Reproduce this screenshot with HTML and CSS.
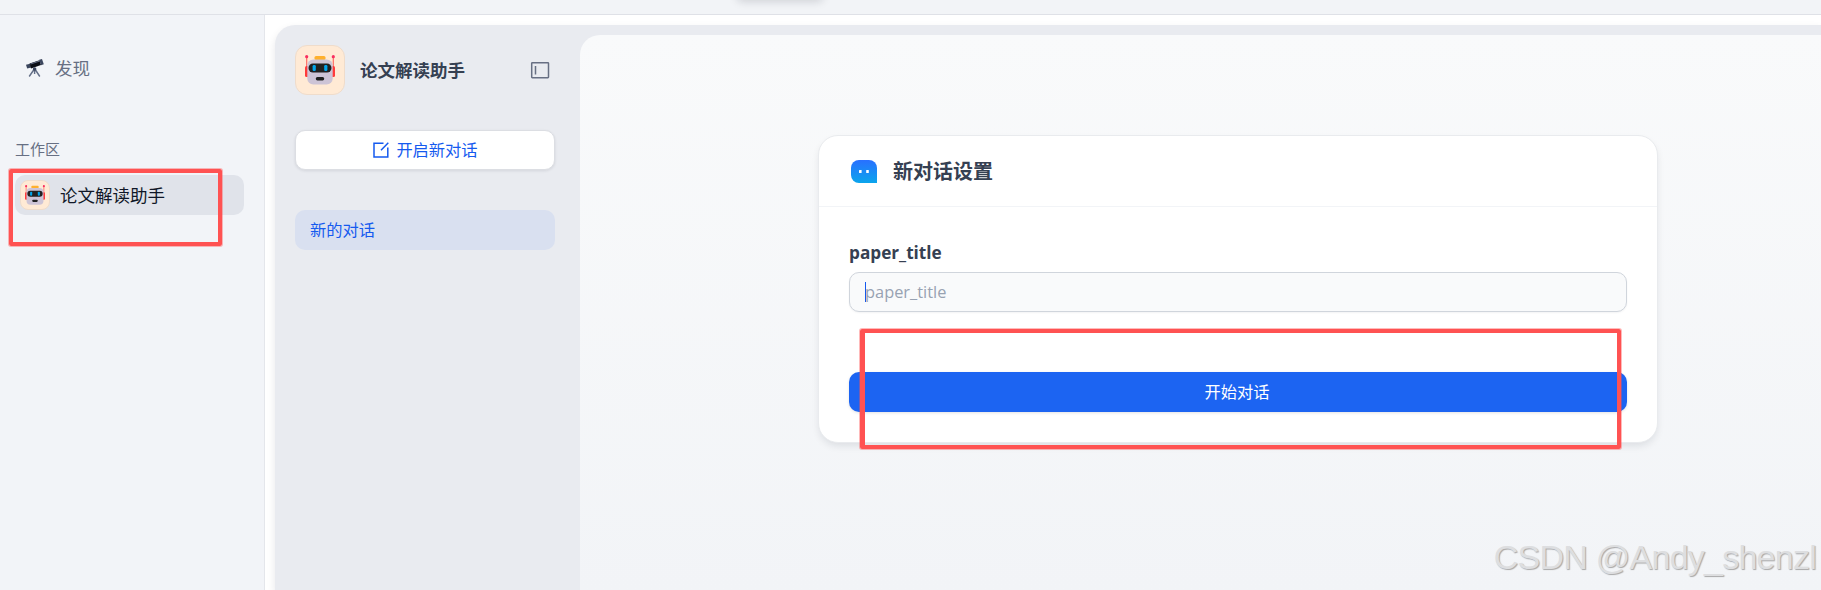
FILE: index.html
```html
<!DOCTYPE html>
<html lang="zh-CN">
<head>
  <meta charset="UTF-8">
  <meta name="viewport" content="width=device-width, initial-scale=1.0">
  <title>论文解读助手</title>
  <link rel="stylesheet" href="styles.css">
</head>
<body>
  <!-- Robot avatar, shared by both sidebars -->
  <svg class="defs" width="0" height="0">
    <symbol id="robot" viewBox="0 0 30 30">
      <path d="M1.7 2v12M28.3 2v12" stroke="#ff6b63" stroke-width="1.2"/>
      <circle cx="1.7" cy="1.7" r="1.6" fill="#f92f60"/>
      <circle cx="28.3" cy="1.7" r="1.6" fill="#f92f60"/>
      <rect x="0" y="11" width="4" height="11" rx="1.5" fill="#ff3b3b"/>
      <rect x="26" y="11" width="4" height="11" rx="1.5" fill="#ff3b3b"/>
      <rect x="9.5" y="1" width="11" height="4" rx="1.5" fill="#ffb02e"/>
      <rect x="2.3" y="4.5" width="25.4" height="25" rx="6" fill="#cdc4d6"/>
      <rect x="3.5" y="8.5" width="23" height="9" rx="4.5" fill="#212121"/>
      <rect x="7.6" y="10" width="3.2" height="6" rx="1.3" fill="#00a6ed"/>
      <rect x="19.2" y="10" width="3.2" height="6" rx="1.3" fill="#00a6ed"/>
      <rect x="10.8" y="22" width="8.4" height="3.4" rx="1.6" fill="#212121"/>
    </symbol>
  </svg>

  <!-- Top Bar -->
  <div class="topbar">
    <div class="nav-pill"></div>
  </div>

  <div class="layout">
    <!-- Workspace Sidebar -->
    <div class="sidebar">
      <div class="discover">
        <svg class="telescope" viewBox="0 0 20 20">
          <path d="M9 11.5L4.2 18.5M10.2 11.5L14.8 18.5M9.6 11v5" stroke="#636e87" stroke-width="1.4" fill="none"/>
          <path d="M1 6.8L5 5.8L6.2 9.6L2.2 10.6Z" fill="#3c465e"/>
          <path d="M4.6 5.5L14.5 2.3L16 7L6 10.4Z" fill="#0b0d14"/>
          <path d="M5.5 6L14.8 3" stroke="#636e87" stroke-width="1"/>
          <path d="M14.2 1.8L17 1L18.8 6.2L16 7.2Z" fill="#3c465e"/>
          <circle cx="9.6" cy="11" r="1.8" fill="#3c465e"/>
        </svg>
        <span>发现</span>
      </div>
      <div class="section-title">工作区</div>
      <div class="app-item">
        <div class="avatar small"><svg><use href="#robot"/></svg></div>
        <span>论文解读助手</span>
      </div>
      <div class="mark mark-app"></div>
    </div>

    <!-- Main Section -->
    <div class="main">
      <div class="panel">
        <!-- Conversation List -->
        <div class="chat-list">
          <div class="chat-header">
            <div class="avatar"><svg><use href="#robot"/></svg></div>
            <h2>论文解读助手</h2>
            <svg class="toggle" viewBox="0 0 20 18" fill="none" stroke="#676f83">
              <rect x="1.7" y="1.7" width="16.8" height="15" rx=".6" stroke-width="1.5"/>
              <path d="M5.5 5v8.5" stroke-width="1.5"/>
            </svg>
          </div>
          <button class="new-chat">
            <svg viewBox="0 0 16 16" fill="none" stroke="#155aef" stroke-width="1.5">
              <path d="M10.5 1.3H1V15h13.8V5.5M8 8.2L15.3.8"/>
            </svg>
            <span>开启新对话</span>
          </button>
          <div class="chat-item">新的对话</div>
        </div>

        <!-- Chat Area -->
        <div class="chat">
          <div class="card">
            <div class="card-header">
              <svg class="bubble" viewBox="0 0 26 23">
                <defs>
                  <linearGradient id="bubbleFill" x1="0" y1="0" x2="0" y2="1">
                    <stop offset="0" stop-color="#2970ff"/>
                    <stop offset="1" stop-color="#0ba5ec"/>
                  </linearGradient>
                </defs>
                <path d="M8 0h10a8 8 0 0 1 8 8v15H8a8 8 0 0 1-8-8V8a8 8 0 0 1 8-8z" fill="url(#bubbleFill)"/>
                <rect x="8" y="10" width="2.6" height="3" rx=".5" fill="#fff"/>
                <rect x="15.2" y="10" width="2.6" height="3" rx=".5" fill="#fff"/>
              </svg>
              <h3>新对话设置</h3>
            </div>
            <div class="card-body">
              <label class="field-label" for="paper">paper_title</label>
              <div class="field">
                <div class="caret"></div>
                <input id="paper" type="text" placeholder="paper_title">
              </div>
              <button class="start">开始对话</button>
            </div>
            <div class="mark mark-start"></div>
          </div>
        </div>
      </div>
    </div>
  </div>

  <div class="watermark">CSDN @Andy_shenzl</div>
</body>
</html>
```
FILE: styles.css
```css
/* Global Styles */
* {
  margin: 0;
  padding: 0;
  box-sizing: border-box;
}

body {
  font-family: "Open Sans", "Noto Sans CJK SC", sans-serif;
  height: 100vh;
  display: flex;
  flex-direction: column;
  overflow: hidden;
  background: #fff;
  color: #354052;
}

button,
input {
  font-family: inherit;
  font-size: 16.25px;
}

svg {
  display: block;
  flex-shrink: 0;
}

.defs {
  position: absolute;
}

/* Top Bar */
.topbar {
  height: 15px;
  flex-shrink: 0;
  background: #f2f4f7;
  border-bottom: 1px solid #dfe1e7;
  overflow: hidden;
}

.nav-pill {
  width: 86px;
  height: 10px;
  margin: -11px 0 0 737px;
  border-radius: 10px;
  background: #fff;
  box-shadow: 0 2px 10px rgba(16, 24, 40, 0.18);
}

.layout {
  flex: 1;
  display: flex;
  min-height: 0;
}

/* Workspace Sidebar */
.sidebar {
  position: relative;
  width: 265px;
  flex-shrink: 0;
  padding: 33px 20px 0 15px;
  background: #f2f4f8;
  border-right: 1px solid #e4e6eb;
}

.discover {
  display: flex;
  align-items: center;
  gap: 10px;
  height: 40px;
  padding-left: 10px;
  font-size: 17.5px;
  color: #676f83;
}

.discover span,
.app-item span,
.new-chat span {
  padding-bottom: 2px;
}

.telescope {
  width: 20px;
  height: 20px;
}

.section-title {
  margin-top: 50px;
  line-height: 22px;
  font-size: 15px;
  color: #676f83;
}

.app-item {
  display: flex;
  align-items: center;
  gap: 10px;
  height: 40px;
  margin-top: 15px;
  padding-left: 5px;
  border-radius: 10px;
  background: #e0e3ea;
  font-size: 17.5px;
  color: #101828;
}

.avatar {
  display: flex;
  align-items: center;
  justify-content: center;
  width: 50px;
  height: 50px;
  flex-shrink: 0;
  border: 1px solid #efdccb;
  border-radius: 12px;
  background: #ffead5;
}

.avatar svg {
  width: 30px;
  height: 30px;
}

.avatar.small {
  width: 30px;
  height: 30px;
  border-radius: 8px;
}

.avatar.small svg {
  width: 20px;
  height: 20px;
}

/* Main Section */
.main {
  flex: 1;
  display: flex;
  min-width: 0;
  padding: 10px 0 0 10px;
}

.panel {
  flex: 1;
  display: flex;
  padding-top: 10px;
  border-radius: 20px 0 0 0;
  background: #e9ebf0;
  box-shadow: 0 4px 8px rgba(16, 24, 40, 0.1);
}

/* Conversation List */
.chat-list {
  width: 305px;
  flex-shrink: 0;
  padding: 10px 25px 0 20px;
}

.chat-header {
  display: flex;
  align-items: center;
  height: 50px;
}

.chat-header h2 {
  flex: 1;
  margin-left: 15px;
  padding-bottom: 1px;
  font-size: 17.5px;
  font-weight: 700;
}

.toggle {
  width: 20px;
  height: 18px;
  margin-right: 5px;
}

.new-chat {
  display: flex;
  align-items: center;
  justify-content: center;
  gap: 7px;
  width: 100%;
  height: 40px;
  margin-top: 35px;
  padding-left: 1px;
  border: 1px solid #dcdee3;
  border-radius: 10px;
  background: #fff;
  box-shadow: 0 1px 3px rgba(16, 24, 40, 0.1);
  color: #155aef;
}

.new-chat svg {
  width: 16px;
  height: 16px;
}

.chat-item {
  height: 40px;
  margin-top: 40px;
  padding-left: 15px;
  border-radius: 10px;
  background: #d9e0f0;
  line-height: 40px;
  font-size: 16.25px;
  color: #155aef;
}

/* Chat Area */
.chat {
  flex: 1;
  padding: 100px 0 0 238px;
  border-radius: 20px 0 0 0;
  background: linear-gradient(#f9fafb, #f2f4f7);
}

.card {
  position: relative;
  width: 840px;
  height: 308px;
  border: 1px solid #e9ebee;
  border-radius: 20px;
  background: #fff;
  box-shadow: 0 4px 8px -2px rgba(16, 24, 40, 0.12);
}

.card-header {
  display: flex;
  align-items: center;
  gap: 16px;
  height: 71px;
  padding-left: 32px;
  border-bottom: 1px solid #f2f4f7;
}

.bubble {
  width: 26px;
  height: 23px;
}

.card-header h3 {
  padding-bottom: 2px;
  font-size: 20px;
  font-weight: 700;
}

.card-body {
  padding: 31px 30px 0;
}

.field-label {
  display: block;
  height: 30px;
  line-height: 30px;
  font-size: 17.2px;
  font-weight: 700;
}

.field {
  display: flex;
  align-items: center;
  height: 40px;
  margin-top: 4px;
  padding-left: 15px;
  border: 1px solid #d0d5dc;
  border-radius: 10px;
  background: #f9fafb;
  box-shadow: 0 1px 2px rgba(16, 24, 40, 0.05);
}

.caret {
  width: 1px;
  height: 20px;
  background: #155aef;
}

.field input {
  flex: 1;
  margin-left: -1px;
  padding-bottom: 2px;
  border: none;
  outline: none;
  background: transparent;
  font-size: 16.4px;
}

.field input::placeholder {
  color: #98a2b2;
}

.start {
  display: block;
  width: 100%;
  height: 40px;
  margin-top: 60px;
  padding: 0 2px 2px 0;
  border: none;
  border-radius: 10px;
  background: #1c64f2;
  box-shadow: 0 1px 3px rgba(16, 24, 40, 0.12);
  color: #fff;
}

/* Highlight frames */
.mark {
  position: absolute;
  border: 4px solid #ff5252;
  border-radius: 2px;
  box-shadow: 0 0 0 1px rgba(255, 82, 82, 0.4);
}

.mark-app {
  left: 9px;
  top: 154px;
  width: 213px;
  height: 77px;
}

.mark-start {
  left: 41px;
  top: 193px;
  width: 761px;
  height: 120px;
  border-left-width: 5px;
}

/* Watermark */
.watermark {
  position: absolute;
  right: 5px;
  bottom: 13px;
  font-family: "Liberation Sans", sans-serif;
  font-size: 34px;
  line-height: 40px;
  letter-spacing: -0.75px;
  white-space: nowrap;
  color: #dddee0;
  text-shadow: 1px 1px 1px #a8a8a8;
}
```
